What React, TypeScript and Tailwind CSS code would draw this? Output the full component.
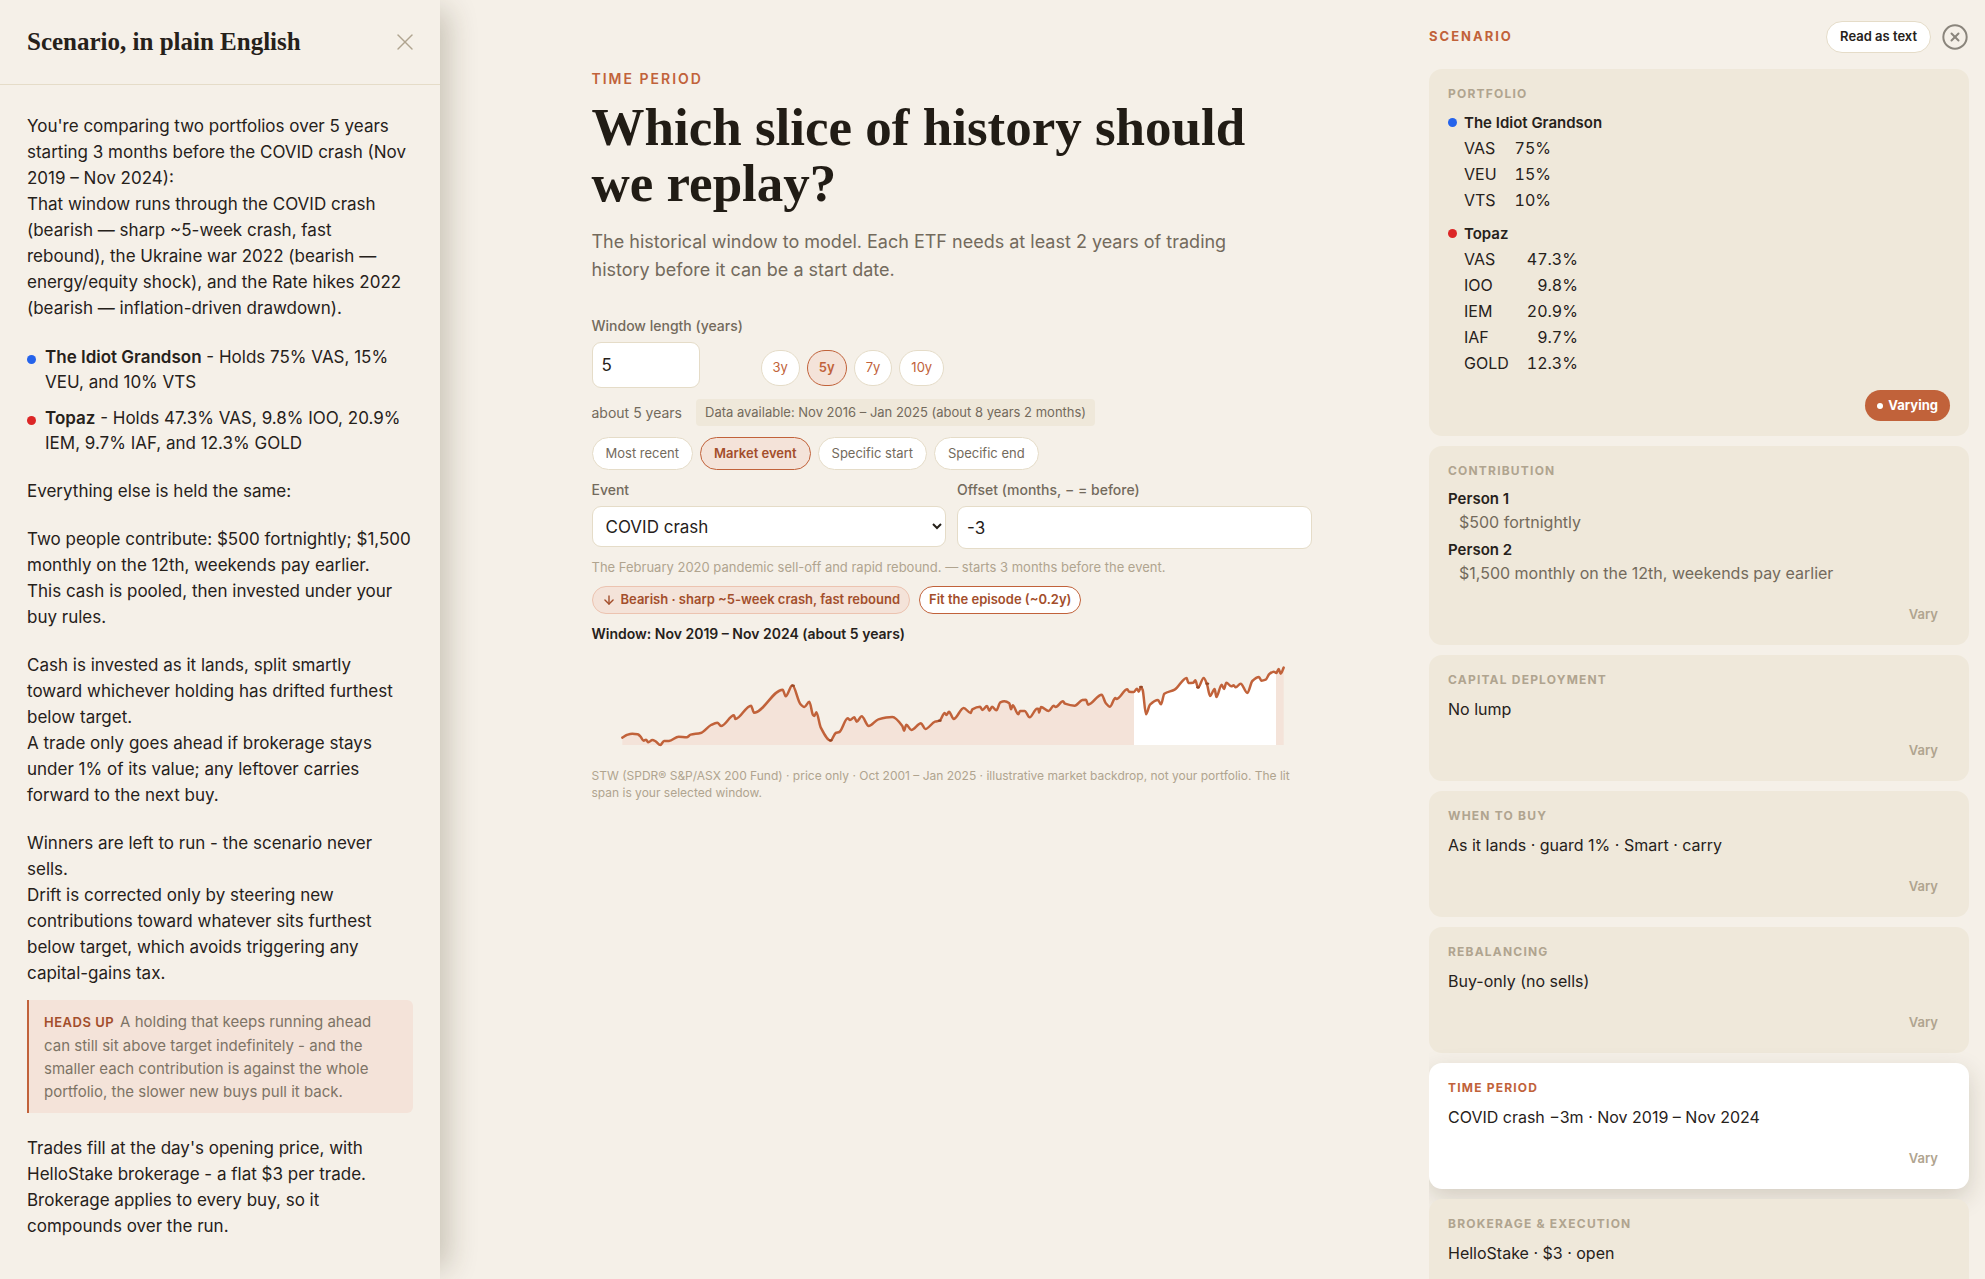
import { useState } from 'react';
import type { ReactNode } from 'react';
import { ArrowDown, CircleX, X } from 'lucide-react';

/** Market backdrop samples, [x, y] in chart units */
const SERIES: [number, number][] = [
  [67, 293], [80, 285], [97, 281], [113, 283], [121, 289], [131, 302], [138, 299], [145, 307],
  [157, 300], [167, 304], [181, 315], [192, 303], [207, 303], [236, 290], [260, 292], [272, 284],
  [302, 279], [333, 255], [352, 248], [363, 258], [402, 226], [406, 237], [453, 197], [462, 218],
  [548, 149], [557, 169], [577, 136], [601, 192], [613, 201], [628, 185], [639, 225], [643, 228],
  [649, 217], [662, 262], [692, 302], [707, 279], [718, 276], [743, 235], [750, 240], [763, 232],
  [770, 245], [785, 229], [806, 258], [835, 238], [877, 231], [907, 258], [912, 272], [919, 254],
  [934, 270], [963, 250], [976, 267], [1005, 245], [1019, 242], [1034, 219], [1039, 225],
  [1047, 215], [1061, 237], [1091, 204], [1112, 219], [1117, 208], [1140, 200], [1147, 210],
  [1161, 198], [1168, 212], [1176, 200], [1189, 211], [1201, 187], [1213, 184], [1228, 190],
  [1233, 208], [1238, 196], [1255, 223], [1260, 213], [1274, 213], [1289, 232], [1311, 206],
  [1315, 206], [1317, 218], [1323, 201], [1346, 213], [1361, 197], [1367, 201], [1389, 184],
  [1395, 191], [1424, 197], [1447, 180], [1458, 179], [1464, 194], [1505, 164], [1517, 189],
  [1530, 200], [1546, 174], [1549, 177], [1582, 148], [1587, 155], [1601, 156], [1611, 146],
  [1616, 155], [1623, 141], [1628, 150], [1638, 223], [1650, 194], [1674, 180], [1683, 193],
  [1693, 161], [1724, 149], [1760, 114], [1765, 129], [1780, 128], [1786, 121], [1794, 143],
  [1811, 114], [1821, 133], [1830, 168], [1844, 147], [1849, 171], [1865, 134], [1872, 147],
  [1879, 128], [1894, 139], [1901, 136], [1907, 142], [1922, 131], [1942, 159], [1957, 123],
  [1977, 111], [1984, 122], [1997, 119], [2008, 102], [2021, 95], [2029, 99], [2036, 87],
  [2042, 101], [2051, 83],
];

const EVENTS: [number, number][] = [
  [579, 137], [692, 301], [1019, 242], [1623, 141], [1794, 142], [1822, 131],
];

const BASELINE = 315;

/** Monotone cubic curve, so peaks and troughs never overshoot */
function monotonePath(points: [number, number][]) {
  const slopes = points.slice(1).map(([x, y], i) => (y - points[i][1]) / (x - points[i][0]));
  const tangents = points.map((_, i) => {
    if (i === 0) return slopes[0];
    if (i === points.length - 1) return slopes[i - 1];
    const a = slopes[i - 1];
    const b = slopes[i];
    return a * b <= 0 ? 0 : (2 * a * b) / (a + b);
  });
  let d = `M${points[0][0]},${points[0][1]}`;
  for (let i = 1; i < points.length; i++) {
    const [x0, y0] = points[i - 1];
    const [x1, y1] = points[i];
    const h = (x1 - x0) / 3;
    d += `C${x0 + h},${y0 + tangents[i - 1] * h} ${x1 - h},${y1 - tangents[i] * h} ${x1},${y1}`;
  }
  return d;
}

function MarketChart() {
  const line = monotonePath(SERIES);
  const area = `${line}L2051,${BASELINE}L67,${BASELINE}Z`;
  return (
    <svg viewBox="-24 60 2160 270" className="block w-full" role="img" aria-label="Market backdrop">
      <defs>
        <clipPath id="window-clip">
          <rect x="1602" y="60" width="426" height="270" />
        </clipPath>
      </defs>
      <path d={area} fill="#f4e3d9" />
      <path d={area} fill="#ffffff" clipPath="url(#window-clip)" />
      <path d={line} fill="none" stroke="#c1623a" strokeWidth="7.5" strokeLinejoin="round" strokeLinecap="round" />
      {EVENTS.map(([x, y]) => (
        <ellipse key={x} cx={x} cy={y} rx="6" ry="3.5" fill="#974726" />
      ))}
    </svg>
  );
}

function Dot({ className }: { className: string }) {
  return <span className={`inline-block size-[9px] shrink-0 rounded-full ${className}`} />;
}

function PlainEnglishPanel() {
  return (
    <aside className="z-10 flex w-[440px] shrink-0 flex-col bg-[#f5f0e8] shadow-[18px_0_28px_-10px_rgba(60,50,20,0.24)]">
      <header className="flex h-[85px] shrink-0 items-center justify-between border-b border-[#e5dcc8] pr-[21px] pl-[27px]">
        <h2 className="font-['Liberation_Serif',serif] text-[25px] font-bold">Scenario, in plain English</h2>
        <button type="button" aria-label="Close" className="text-[#b0a48f]">
          <X size={28} strokeWidth={1.2} />
        </button>
      </header>
      <div className="px-[27px] pt-[28px] text-[17px] leading-[26px]">
        <p>
          <span className="block">
            You're comparing two portfolios over 5 years starting 3 months before the COVID crash (Nov 2019 – Nov 2024):
          </span>
          <span className="block">
            That window runs through the COVID crash (bearish — sharp ~5-week crash, fast rebound), the Ukraine war 2022
            (bearish — energy/equity shock), and the Rate hikes 2022 (bearish — inflation-driven drawdown).
          </span>
        </p>
        <ul className="mt-[24px] flex flex-col gap-[11px] leading-[25px]">
          <li className="flex gap-[9px]">
            <Dot className="mt-[10px] bg-[#2563eb]" />
            <span>
              <strong className="font-semibold">The Idiot Grandson</strong> - Holds 75% VAS, 15% VEU, and 10% VTS
            </span>
          </li>
          <li className="flex gap-[9px]">
            <Dot className="mt-[10px] bg-[#dc2626]" />
            <span>
              <strong className="font-semibold">Topaz</strong> - Holds 47.3% VAS, 9.8% IOO, 20.9% IEM, 9.7% IAF, and
              12.3% GOLD
            </span>
          </li>
        </ul>
        <p className="mt-[22px]">Everything else is held the same:</p>
        <p className="mt-[22px]">
          Two people contribute: $500 fortnightly; $1,500 monthly on the 12th, weekends pay earlier.
          <span className="block">This cash is pooled, then invested under your buy rules.</span>
        </p>
        <p className="mt-[22px] pr-2">
          Cash is invested as it lands, split smartly toward whichever holding has drifted furthest below target.
          <span className="block">
            A trade only goes ahead if brokerage stays under 1% of its value; any leftover carries forward to the next
            buy.
          </span>
        </p>
        <p className="mt-[22px]">
          Winners are left to run - the scenario never sells.
          <span className="block">
            Drift is corrected only by steering new contributions toward whatever sits furthest below target, which
            avoids triggering any capital-gains tax.
          </span>
        </p>
        <p className="mt-[14px] rounded-r-md border-l-2 border-[#c1623a] bg-[#f4e3d9] py-[10px] pr-4 pl-[15px] text-[15px] leading-[23px] text-[#7d7365]">
          <span className="mr-[6px] text-[13px] font-semibold tracking-[0.5px] text-[#a34e2b]">HEADS UP</span>
          A holding that keeps running ahead can still sit above target indefinitely - and the smaller each contribution
          is against the whole portfolio, the slower new buys pull it back.
        </p>
        <p className="mt-[22px]">
          Trades fill at the day's opening price, with HelloStake brokerage - a flat $3 per trade.
          <span className="block">Brokerage applies to every buy, so it compounds over the run.</span>
        </p>
      </div>
    </aside>
  );
}

const LENGTHS = ['3y', '5y', '7y', '10y'];
const MODES = ['Most recent', 'Market event', 'Specific start', 'Specific end'];

function TimePeriodForm() {
  const [years, setYears] = useState('5');
  const [mode, setMode] = useState('Market event');
  const [offset, setOffset] = useState('-3');

  return (
    <main className="min-w-0 flex-1 pt-[69px] pr-4 pl-[50px]">
      <div className="mx-auto max-w-[720px]">
        <p className="text-[14px] leading-5 font-semibold tracking-[2px] text-[#c1623a]">TIME PERIOD</p>
        <h1 className="mt-[10px] max-w-[700px] font-['Liberation_Serif',serif] text-[53px] leading-[56px] font-bold text-[#211c15]">
          Which slice of history should we replay?
        </h1>
        <p className="mt-[17px] max-w-[660px] text-[18px] leading-7 text-[#736a5c]">
          The historical window to model. Each ETF needs at least 2 years of trading history before it can be a start
          date.
        </p>

        <div className="mt-[32px] flex items-end">
          <div className="w-[169px]">
            <label htmlFor="window-length" className="block text-[14px] leading-5 font-medium whitespace-nowrap text-[#736a5c]">
              Window length (years)
            </label>
            <input
              id="window-length"
              value={years}
              onChange={(e) => setYears(e.target.value)}
              className="mt-[6px] block h-[46px] w-[108px] rounded-[9px] border border-[#e5dcc8] bg-white px-[9px] text-[17px]"
            />
          </div>
          <div className="flex gap-[7px] pb-[2px]">
            {LENGTHS.map((length) => (
              <button
                key={length}
                type="button"
                onClick={() => setYears(length.replace('y', ''))}
                className={`h-9 rounded-full border px-[11px] text-[13px] ${
                  length === `${years}y`
                    ? 'border-[#c1623a] bg-[#f4e3d9] font-semibold text-[#c1623a]'
                    : 'border-[#e5dcc8] bg-white text-[#c1623a]'
                }`}
              >
                {length}
              </button>
            ))}
          </div>
        </div>

        <div className="mt-[11px] flex items-center gap-[14px] text-[14px] text-[#736a5c]">
          <span>about {years} years</span>
          <span className="rounded bg-[#efe8da] px-[9px] text-[13px] leading-[27px]">
            Data available: Nov 2016 – Jan 2025 (about 8 years 2 months)
          </span>
        </div>

        <div className="mt-[11px] flex gap-[7px]">
          {MODES.map((item) => (
            <button
              key={item}
              type="button"
              onClick={() => setMode(item)}
              className={`h-[33px] rounded-full border px-[13px] text-[13px] ${
                item === mode
                  ? 'border-[#c1623a] bg-[#f4e3d9] font-semibold text-[#a34e2b]'
                  : 'border-[#e5dcc8] bg-white text-[#736a5c]'
              }`}
            >
              {item}
            </button>
          ))}
        </div>

        <div className="mt-[10px] grid grid-cols-2 items-start gap-[11px]">
          <div>
            <label htmlFor="event" className="block text-[14px] leading-5 font-medium text-[#736a5c]">
              Event
            </label>
            <select
              id="event"
              className="mt-[6px] block h-[41px] w-full rounded-[9px] border border-[#e5dcc8] bg-white px-[9px] text-[17px]"
            >
              <option>COVID crash</option>
            </select>
          </div>
          <div>
            <label htmlFor="offset" className="block text-[14px] leading-5 font-medium text-[#736a5c]">
              Offset (months, − = before)
            </label>
            <input
              id="offset"
              value={offset}
              onChange={(e) => setOffset(e.target.value)}
              className="mt-[6px] block h-[43px] w-full rounded-[9px] border border-[#e5dcc8] bg-white px-[9px] text-[17px]"
            />
          </div>
        </div>

        <p className="mt-2 text-[13px] leading-5 text-[#b0a48f]">
          The February 2020 pandemic sell-off and rapid rebound. — starts 3 months before the event.
        </p>

        <div className="mt-[9px] flex gap-[9px] text-[13px] font-semibold text-[#a34e2b]">
          <span className="flex h-7 items-center gap-[5px] rounded-full border border-[#ecc3b0] bg-[#f4e3d9] px-[9px]">
            <ArrowDown size={14} strokeWidth={2.4} />
            Bearish · sharp ~5-week crash, fast rebound
          </span>
          <button type="button" className="h-7 rounded-full border border-[#c1623a] bg-white px-[9px]">
            Fit the episode (~0.2y)
          </button>
        </div>

        <p className="mt-[10px] text-[14px] leading-5 font-semibold">Window: Nov 2019 – Nov 2024 (about 5 years)</p>
        <div className="mt-4">
          <MarketChart />
        </div>
        <p className="mt-[17px] text-[12px] leading-[17px] text-[#b0a48f]">
          STW (SPDR® S&P/ASX 200 Fund) · price only · Oct 2001 – Jan 2025 · illustrative market backdrop, not your
          portfolio. The lit span is your selected window.
        </p>
      </div>
    </main>
  );
}

interface CardProps {
  title: string;
  children: ReactNode;
  /** Card of the step being edited */
  active?: boolean;
  /** Whether this setting differs between runs */
  varying?: boolean;
}

function Card({ title, children, active = false, varying = false }: CardProps) {
  return (
    <section
      className={`shrink-0 rounded-[13px] px-[19px] pt-[17px] pb-[15px] ${
        active ? 'bg-white shadow-[0_9px_24px_rgba(60,50,20,0.18)]' : 'bg-[#efe8da]'
      }`}
    >
      <h3 className={`text-[12px] leading-4 font-bold tracking-widest ${active ? 'text-[#c1623a]' : 'text-[#b0a48f]'}`}>
        {title}
      </h3>
      <div className="mt-2 text-[16px] leading-[26px]">{children}</div>
      <div className="mt-[13px] flex justify-end">
        {varying ? (
          <button
            type="button"
            className="flex h-[31px] items-center gap-[5px] rounded-full bg-[#c1623a] px-3 text-[13px] font-bold text-white"
          >
            <span className="size-[6px] rounded-full bg-white" />
            Varying
          </button>
        ) : (
          <button type="button" className="h-[31px] rounded-full px-3 text-[13px] font-semibold text-[#b0a48f]">
            Vary
          </button>
        )}
      </div>
    </section>
  );
}

function Holdings({ name, dot, rows }: { name: string; dot: string; rows: [string, string][] }) {
  return (
    <div>
      <h4 className="flex items-center gap-[7px] text-[15px] leading-[25px] font-semibold">
        <Dot className={dot} />
        {name}
      </h4>
      <table className="ml-4">
        <tbody>
          {rows.map(([ticker, weight]) => (
            <tr key={ticker}>
              <td className="pr-[18px]">{ticker}</td>
              <td className="text-right tabular-nums">{weight}</td>
            </tr>
          ))}
        </tbody>
      </table>
    </div>
  );
}

function Person({ name, schedule }: { name: string; schedule: string }) {
  return (
    <div>
      <h4 className="text-[15px] leading-6 font-semibold">{name}</h4>
      <p className="pl-[11px] leading-[22px] text-[#736a5c]">{schedule}</p>
    </div>
  );
}

function ScenarioPanel() {
  return (
    <aside className="flex w-[556px] shrink-0 flex-col gap-[10px] overflow-hidden pt-[21px]">
      <header className="mb-[6px] flex h-8 items-center justify-between pr-4">
        <h2 className="text-[13px] font-bold tracking-[2px] text-[#c1623a]">SCENARIO</h2>
        <div className="flex items-center gap-[10px]">
          <button
            type="button"
            className="h-8 rounded-full border border-[#e5dcc8] bg-white px-[13px] text-[13px] font-semibold"
          >
            Read as text
          </button>
          <button type="button" aria-label="Close scenario" className="text-[#8a857c]">
            <CircleX size={28} strokeWidth={1.7} />
          </button>
        </div>
      </header>
      <div className="-ml-8 flex min-h-0 flex-1 flex-col gap-[10px] overflow-hidden pr-4 pl-8">
        <Card title="PORTFOLIO" varying>
          <div className="flex flex-col gap-2 pb-px">
            <Holdings
              name="The Idiot Grandson"
              dot="bg-[#2563eb]"
              rows={[['VAS', '75%'], ['VEU', '15%'], ['VTS', '10%']]}
            />
            <Holdings
              name="Topaz"
              dot="bg-[#dc2626]"
              rows={[['VAS', '47.3%'], ['IOO', '9.8%'], ['IEM', '20.9%'], ['IAF', '9.7%'], ['GOLD', '12.3%']]}
            />
          </div>
        </Card>
        <Card title="CONTRIBUTION">
          <div className="flex flex-col gap-[5px] pb-[2px]">
            <Person name="Person 1" schedule="$500 fortnightly" />
            <Person name="Person 2" schedule="$1,500 monthly on the 12th, weekends pay earlier" />
          </div>
        </Card>
        <Card title="CAPITAL DEPLOYMENT">No lump</Card>
        <Card title="WHEN TO BUY">As it lands · guard 1% · Smart · carry</Card>
        <Card title="REBALANCING">Buy-only (no sells)</Card>
        <Card title="TIME PERIOD" active>
          COVID crash −3m · Nov 2019 – Nov 2024
        </Card>
        <Card title="BROKERAGE & EXECUTION">HelloStake · $3 · open</Card>
      </div>
    </aside>
  );
}

export default function App() {
  return (
    <div className="flex h-screen overflow-hidden bg-[#f5f0e8] font-['Inter',sans-serif] text-[#26211a]">
      <PlainEnglishPanel />
      <TimePeriodForm />
      <ScenarioPanel />
    </div>
  );
}
